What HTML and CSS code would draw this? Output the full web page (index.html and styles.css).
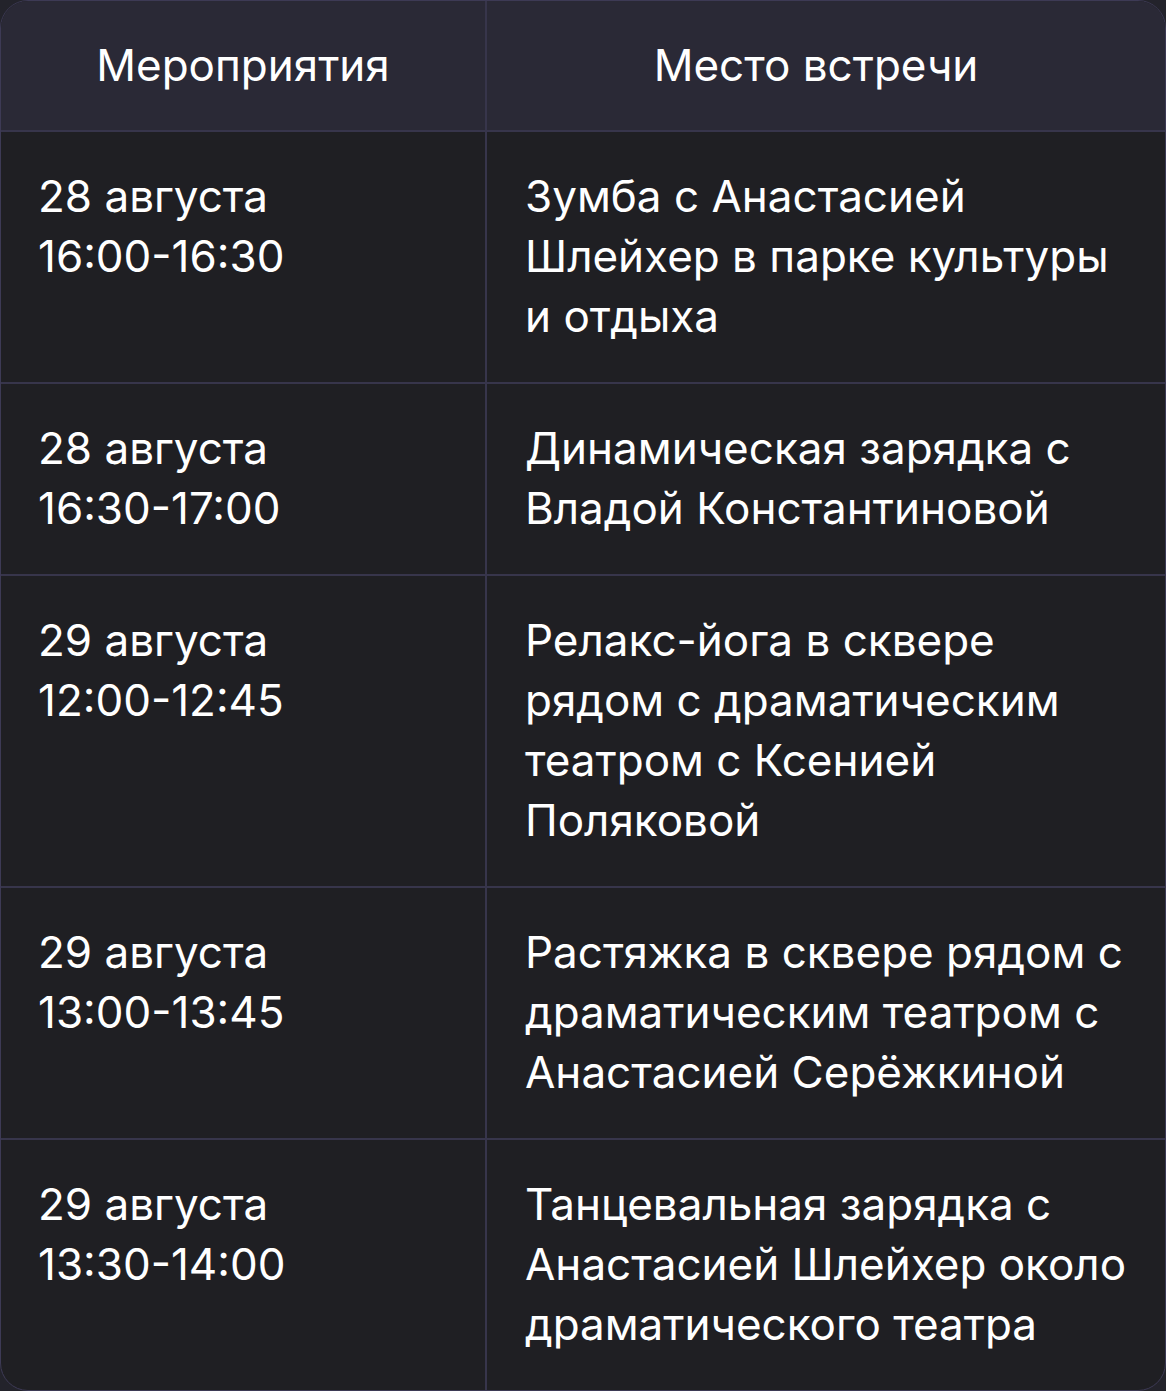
FILE: index.html
```html
<!DOCTYPE html>
<html lang="ru">
<head>
<meta charset="utf-8">
<title>Расписание</title>
<link rel="stylesheet" href="styles.css">
</head>
<body>
<div class="table">
  <div class="row head">
    <div class="cell c1">Мероприятия</div>
    <div class="cell c2">Место встречи</div>
  </div>
  <div class="row">
    <div class="cell c1">28 августа<br>16:00-16:30</div>
    <div class="cell c2">Зумба с Анастасией Шлейхер в парке культуры и отдыха</div>
  </div>
  <div class="row">
    <div class="cell c1">28 августа<br>16:30-17:00</div>
    <div class="cell c2">Динамическая зарядка с Владой Константиновой</div>
  </div>
  <div class="row">
    <div class="cell c1">29 августа<br>12:00-12:45</div>
    <div class="cell c2">Релакс-йога в сквере рядом с драматическим театром с Ксенией Поляковой</div>
  </div>
  <div class="row">
    <div class="cell c1">29 августа<br>13:00-13:45</div>
    <div class="cell c2">Растяжка в сквере рядом с драматическим театром с Анастасией Серёжкиной</div>
  </div>
  <div class="row last">
    <div class="cell c1">29 августа<br>13:30-14:00</div>
    <div class="cell c2">Танцевальная зарядка с Анастасией Шлейхер около драматического театра</div>
  </div>
</div>
</body>
</html>
```
FILE: styles.css
```css
html, body {
  margin: 0;
  padding: 0;
  background: #23232b;
}
.table {
  width: 1166px;
  height: 1391px;
  box-sizing: border-box;
  border: 1px solid #3d3a55;
  border-radius: 28px;
  overflow: hidden;
  background: #1f1f23;
  font-family: Inter, "Noto Sans", sans-serif;
  font-size: 44px;
  line-height: 60px;
  color: #ffffff;
  display: flex;
  flex-direction: column;
}
.row {
  display: grid;
  grid-template-columns: 486px 1fr;
  border-bottom: 2px solid #37354b;
}
.row.last {
  border-bottom: none;
  flex: 1;
}
.head {
  background: #2a2936;
  height: 131px;
  box-sizing: border-box;
  text-align: center;
}
.head .cell {
  padding: 0 0 2px 0;
  display: flex;
  align-items: center;
  justify-content: center;
}
.head .c2 {
  padding-right: 20px;
}
.cell {
  padding: 34px 20px 36px 37px;
}
.c1 {
  border-right: 2px solid #37354b;
}
.c2 {
  padding-left: 38px;
  padding-right: 36px;
}
```
